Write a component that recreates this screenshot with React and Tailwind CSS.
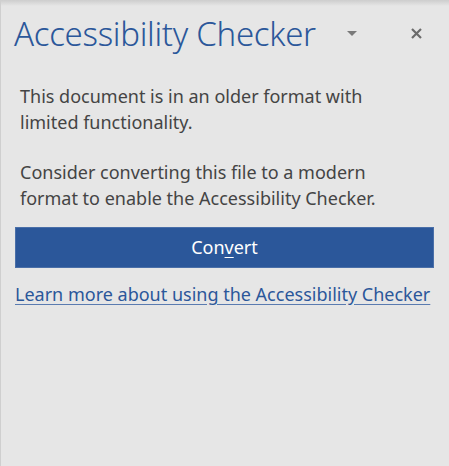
import React from 'react';

export default function App() {
  return (
    <div
      className="relative w-[449px] h-[466px] bg-[#e6e6e6] border-l border-[#cfcfcf] overflow-hidden"
      style={{ fontFamily: '"Noto Sans", "Open Sans", sans-serif' }}
    >
      <div className="absolute inset-x-0 top-0 h-[6px] bg-gradient-to-b from-[#cdcdcd] to-[#e6e6e6]" />

      <div className="flex items-center pl-[13px] pr-[23px] pt-[10px] h-[56px]">
        <h1 className="flex-1 text-[33px] font-light leading-none text-[#2b579a] tracking-[-0.3px]">
          Accessibility Checker
        </h1>
        <button className="w-[20px] h-[20px] flex items-center justify-center mr-[44px]">
          <svg width="10" height="5" viewBox="0 0 10 5">
            <path d="M0 0h10L5 5z" fill="#7a7a7a" />
          </svg>
        </button>
        <button className="w-[20px] h-[20px] flex items-center justify-center">
          <svg width="11" height="11" viewBox="0 0 11 11">
            <path d="M1 1l9 9M10 1l-9 9" stroke="#6b6b6b" strokeWidth="2.2" />
          </svg>
        </button>
      </div>

      <div className="pl-[19px] pr-[40px] pt-[27px] text-[18px] leading-[26px] text-[#444444]">
        <p>This document is in an older format with limited functionality.</p>
        <p className="mt-[24px]">
          Consider converting this file to a modern format to enable the Accessibility Checker.
        </p>
      </div>

      <div className="pl-[14px] pr-[15px] mt-[16px]">
        <button className="w-full h-[41px] bg-[#2b579a] border border-[#4a6fa8] text-white text-[18px]">
          Con<span className="underline underline-offset-[3px]">v</span>ert
        </button>
        <a
          href="#"
          className="block mt-[13px] text-[18px] leading-[26px] text-[#2b579a] underline underline-offset-[3px] decoration-[#5a7bb0] whitespace-nowrap"
        >
          Learn more about using the Accessibility Checker
        </a>
      </div>
    </div>
  );
}
